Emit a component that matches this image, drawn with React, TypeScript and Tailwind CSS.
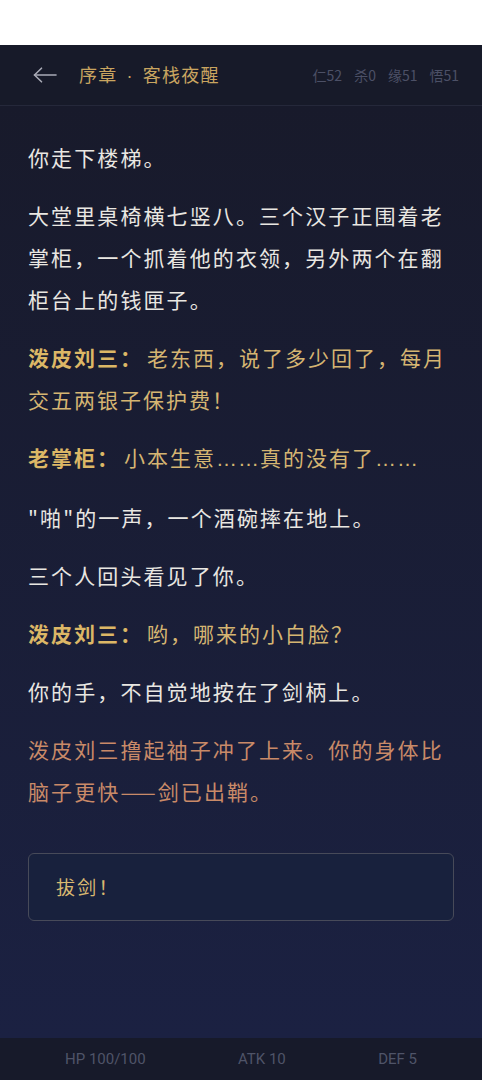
type Para =
  | { kind: 'text'; lines: string[] }
  | { kind: 'talk'; name: string; lines: string[] }
  | { kind: 'action'; lines: string[] }

const story: Para[] = [
  { kind: 'text', lines: ['你走下楼梯。'] },
  { kind: 'text', lines: ['大堂里桌椅横七竖八。三个汉子正围着老', '掌柜，一个抓着他的衣领，另外两个在翻', '柜台上的钱匣子。'] },
  { kind: 'talk', name: '泼皮刘三：', lines: ['老东西，说了多少回了，每月', '交五两银子保护费！'] },
  { kind: 'talk', name: '老掌柜：', lines: ['小本生意……真的没有了……'] },
  { kind: 'text', lines: ['"啪"的一声，一个酒碗摔在地上。'] },
  { kind: 'text', lines: ['三个人回头看见了你。'] },
  { kind: 'talk', name: '泼皮刘三：', lines: ['哟，哪来的小白脸？'] },
  { kind: 'text', lines: ['你的手，不自觉地按在了剑柄上。'] },
  { kind: 'action', lines: ['泼皮刘三撸起袖子冲了上来。你的身体比', '脑子更快——剑已出鞘。'] },
]

const stats = [
  { label: '仁', value: 52 },
  { label: '杀', value: 0 },
  { label: '缘', value: 51 },
  { label: '悟', value: 51 },
]

// ellipsis sits on the baseline in the reference, so take it from a latin font
function Line({ text }: { text: string }) {
  const parts = text.split(/(……)/)
  return (
    <span className="block whitespace-nowrap">
      {parts.map((part, i) =>
        part === '……' ? (
          <span key={i} className="font-['Liberation_Sans',sans-serif] tracking-[1px]">……</span>
        ) : (
          <span key={i}>{part}</span>
        )
      )}
    </span>
  )
}

function BackArrow() {
  return (
    <svg width="24" height="16" viewBox="0 0 24 16" fill="none" stroke="#a9abb6" strokeWidth="1.6" strokeLinecap="round" strokeLinejoin="round">
      <path d="M1.5 8H23" />
      <path d="M8.5 1.2L1.5 8l7 6.8" />
    </svg>
  )
}

export default function App() {
  return (
    <div className="h-[1080px] flex flex-col bg-white font-['Noto_Sans_CJK_SC','Noto_Sans',sans-serif]">
      <div className="h-[45px] shrink-0 bg-white" />

      {/* header */}
      <header className="h-[61px] shrink-0 flex items-center pl-[33px] pr-[23px] bg-[#171a29] border-b border-[#25283a]">
        <BackArrow />
        <h1 className="ml-[22px] text-[18px] tracking-[0.07em] text-[#c9a560]">
          序章<span className="mx-[9px] font-['Liberation_Sans',sans-serif]">·</span>客栈夜醒
        </h1>
        <div className="ml-auto flex gap-[12px] text-[14px] text-[#4c5066]">
          {stats.map(s => (
            <span key={s.label}>{s.label}{s.value}</span>
          ))}
        </div>
      </header>

      <main className="flex-1 flex flex-col px-[28px] pt-[30px] bg-linear-to-b from-[#181a2b] to-[#1b2142]">
        <div className="flex flex-col gap-[16px] text-[21px] leading-[42px] tracking-[2.1px]">
          {story.map((p, i) => {
            if (p.kind === 'talk') {
              return (
                <div key={i} className="text-[#d5b572] tracking-[2px]">
                  {p.lines.map((l, j) => (
                    <div key={j} className="flex whitespace-nowrap">
                      {j === 0 && <span className="font-bold text-[#dcb766] mr-[4px]">{p.name}</span>}
                      <Line text={l} />
                    </div>
                  ))}
                </div>
              )
            }
            return (
              <div key={i} className={p.kind === 'action' ? 'text-[#c98a68]' : 'text-[#e9e7e2]'}>
                {p.lines.map((l, j) => <Line key={j} text={l} />)}
              </div>
            )
          })}
        </div>

        <button className="mt-[41px] h-[68px] w-full text-left pl-[27px] rounded-[6px] border border-[#474a59] bg-[#18213d] text-[19px] tracking-[0.12em] text-[#d8b871]">
          拔剑！
        </button>
      </main>

      {/* stats bar */}
      <footer className="h-[42px] shrink-0 flex items-center justify-between px-[65px] bg-[#171a2a] text-[15px] text-[#4f5468] font-['Roboto','Noto_Sans_CJK_SC',sans-serif]">
        <span>HP 100/100</span>
        <span>ATK 10</span>
        <span>DEF 5</span>
      </footer>
    </div>
  )
}
